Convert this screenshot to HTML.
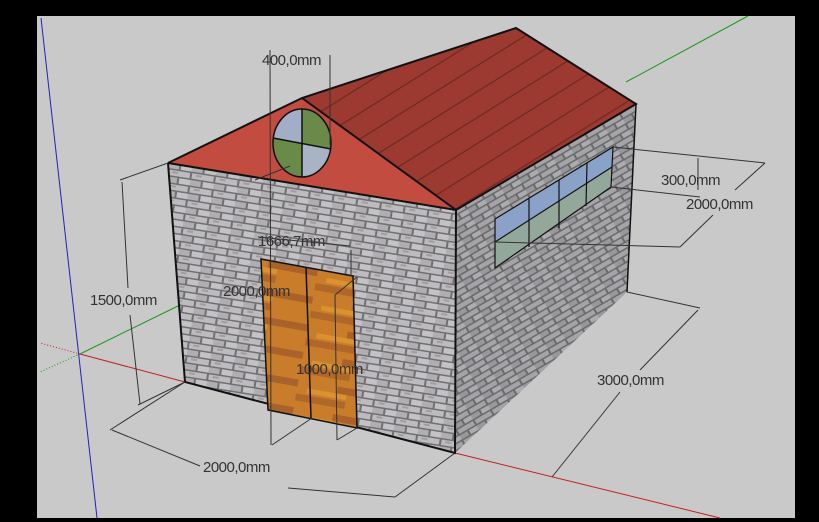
<!DOCTYPE html>
<html><head><meta charset="utf-8"><style>
html,body{margin:0;padding:0;background:#000;width:819px;height:522px;overflow:hidden}
svg{display:block}
text{font-family:"Liberation Sans",sans-serif;font-size:15px;fill:#333;letter-spacing:-0.5px}
</style></head><body>
<svg width="819" height="522" viewBox="0 0 819 522" xmlns="http://www.w3.org/2000/svg">
<defs>
<pattern id="brick" width="24" height="14" patternUnits="userSpaceOnUse" patternTransform="rotate(9)">
<rect width="24" height="14" fill="#707070"/>
<rect x="1" y="1" width="22" height="5.5" fill="#bcbcc0"/>
<rect x="-11" y="8" width="22" height="5.5" fill="#b0aeb2"/>
<rect x="13" y="8" width="22" height="5.5" fill="#c4c2c6"/>
<rect x="5" y="2" width="6" height="2" fill="#8a6a6a" opacity=".4"/>
</pattern>
<pattern id="brick2" width="20" height="12" patternUnits="userSpaceOnUse" patternTransform="rotate(-30)">
<rect width="20" height="12" fill="#6a6a6a"/>
<rect x="1" y="1" width="18" height="4.5" fill="#a4a4a8"/>
<rect x="-9" y="7" width="18" height="4.5" fill="#98989c"/>
<rect x="11" y="7" width="18" height="4.5" fill="#acacb0"/>
</pattern>
<pattern id="roof" width="22" height="40" patternUnits="userSpaceOnUse" patternTransform="rotate(58)">
<rect width="22" height="40" fill="#9c3a31"/>
<rect x="0" width="1.2" height="40" fill="#702822"/>
</pattern>
<pattern id="wood" width="90" height="28" patternUnits="userSpaceOnUse" patternTransform="rotate(10)">
<rect width="90" height="28" fill="#c97c2a"/>
<rect y="0" width="50" height="7" fill="#b0682a"/>
<rect x="40" y="14" width="50" height="7" fill="#a8622a"/>
<rect x="10" y="21" width="40" height="5" fill="#d9922e"/>
</pattern>
<clipPath id="cw"><ellipse cx="302" cy="143" rx="29" ry="34"/></clipPath>
</defs>
<rect width="819" height="522" fill="#000"/>
<rect x="37" y="16" width="758" height="502" fill="#c9c9c9"/>
<line x1="41" y1="18" x2="97" y2="518" stroke="#2020c0" stroke-width="1"/>
<line x1="80" y1="354" x2="180" y2="305" stroke="#1a9a1a" stroke-width="1"/>
<line x1="626" y1="82" x2="748" y2="16" stroke="#1a9a1a" stroke-width="1"/>
<line x1="80" y1="354" x2="40" y2="372" stroke="#1a9a1a" stroke-width="1" stroke-dasharray="1,2"/>
<line x1="80" y1="354" x2="185" y2="382" stroke="#c02020" stroke-width="1"/>
<line x1="455" y1="453" x2="720" y2="518" stroke="#c02020" stroke-width="1"/>
<line x1="80" y1="354" x2="40" y2="343" stroke="#c02020" stroke-width="1" stroke-dasharray="1,2"/>
<polygon points="456,210 636,104 627,292 455,453" fill="url(#brick2)"/>
<polygon points="168,163 456,210 455,453 185,382" fill="url(#brick)"/>
<polygon points="168,163 302,98 456,210" fill="#c24c40"/>
<polygon points="302,98 516,28 636,104 456,210" fill="url(#roof)"/>
<polyline points="168,163 302,98 516,28 636,104 456,210 168,163" fill="none" stroke="#111" stroke-width="2"/>
<polyline points="302,98 456,210 455,453 185,382 168,163" fill="none" stroke="#111" stroke-width="2"/>
<line x1="636" y1="104" x2="627" y2="292" stroke="#111" stroke-width="1.5"/>
<g clip-path="url(#cw)">
<rect x="270" y="105" width="70" height="80" fill="#6a8a4a"/>
<polygon points="302,143 302,100 260,100 260,136" fill="#a2aec6"/>
<polygon points="302,143 340,150 340,190 302,190" fill="#a8b4c6"/>
</g>
<ellipse cx="302" cy="143" rx="29" ry="34" fill="none" stroke="#111" stroke-width="1.5"/>
<line x1="302" y1="109" x2="302" y2="177" stroke="#111" stroke-width="1.5"/>
<line x1="273" y1="138" x2="331" y2="149" stroke="#111" stroke-width="1.5"/>
<polygon points="261,259 353,276 357,428 268,410" fill="url(#wood)"/>
<polygon points="261,259 353,276 357,428 268,410" fill="none" stroke="#111" stroke-width="1.5"/>
<line x1="306" y1="267" x2="311" y2="418" stroke="#111" stroke-width="1.5"/>
<polygon points="495,219 613,147 612,167 495,242" fill="#8aa2c8"/>
<polygon points="495,242 612,167 611,187 495,268" fill="#93a89a"/>
<polygon points="495,219 613,147 611,187 495,268" fill="none" stroke="#111" stroke-width="1.2"/>
<line x1="495" y1="242" x2="612" y2="167" stroke="#111" stroke-width="1.2"/>
<line x1="529" y1="199" x2="529" y2="247" stroke="#111" stroke-width="1.2"/>
<line x1="559" y1="180" x2="559" y2="228" stroke="#111" stroke-width="1.2"/>
<line x1="587" y1="163" x2="586" y2="206" stroke="#111" stroke-width="1.2"/>
<g stroke="#333" stroke-width="1" fill="none">
<line x1="168" y1="163" x2="120" y2="180"/><line x1="185" y1="382" x2="138" y2="405"/>
<line x1="122" y1="182" x2="128" y2="288"/><line x1="130" y1="315" x2="140" y2="404"/>
<line x1="185" y1="382" x2="110" y2="430"/><line x1="455" y1="453" x2="395" y2="497"/>
<line x1="112" y1="430" x2="200" y2="466"/><line x1="288" y1="488" x2="395" y2="497"/>
<line x1="627" y1="292" x2="700" y2="308"/><line x1="698" y1="310" x2="640" y2="370"/><line x1="620" y1="392" x2="552" y2="477"/>
<line x1="613" y1="147" x2="765" y2="163"/><line x1="611" y1="187" x2="700" y2="197"/><line x1="495" y1="242" x2="680" y2="247"/>
<line x1="765" y1="163" x2="735" y2="190"/><line x1="713" y1="215" x2="680" y2="247"/>
<line x1="698" y1="158" x2="698" y2="190"/>
<line x1="270" y1="50" x2="271" y2="445"/><line x1="330" y1="55" x2="330" y2="145"/>
<line x1="255" y1="180" x2="290" y2="166"/>
<line x1="258" y1="237" x2="350" y2="246"/><line x1="351" y1="250" x2="351" y2="276"/>
<line x1="357" y1="277" x2="335" y2="295"/><line x1="335" y1="295" x2="337" y2="440"/>
<line x1="357" y1="428" x2="337" y2="440"/><line x1="312" y1="418" x2="272" y2="445"/>
</g>
<text x="262" y="65">400,0mm</text>
<text x="258" y="246">1666,7mm</text>
<text x="223" y="296">2000,0mm</text>
<text x="90" y="305">1500,0mm</text>
<text x="296" y="374">1000,0mm</text>
<text x="203" y="472">2000,0mm</text>
<text x="597" y="385">3000,0mm</text>
<text x="661" y="185">300,0mm</text>
<text x="686" y="209">2000,0mm</text>
</svg>
</body></html>
